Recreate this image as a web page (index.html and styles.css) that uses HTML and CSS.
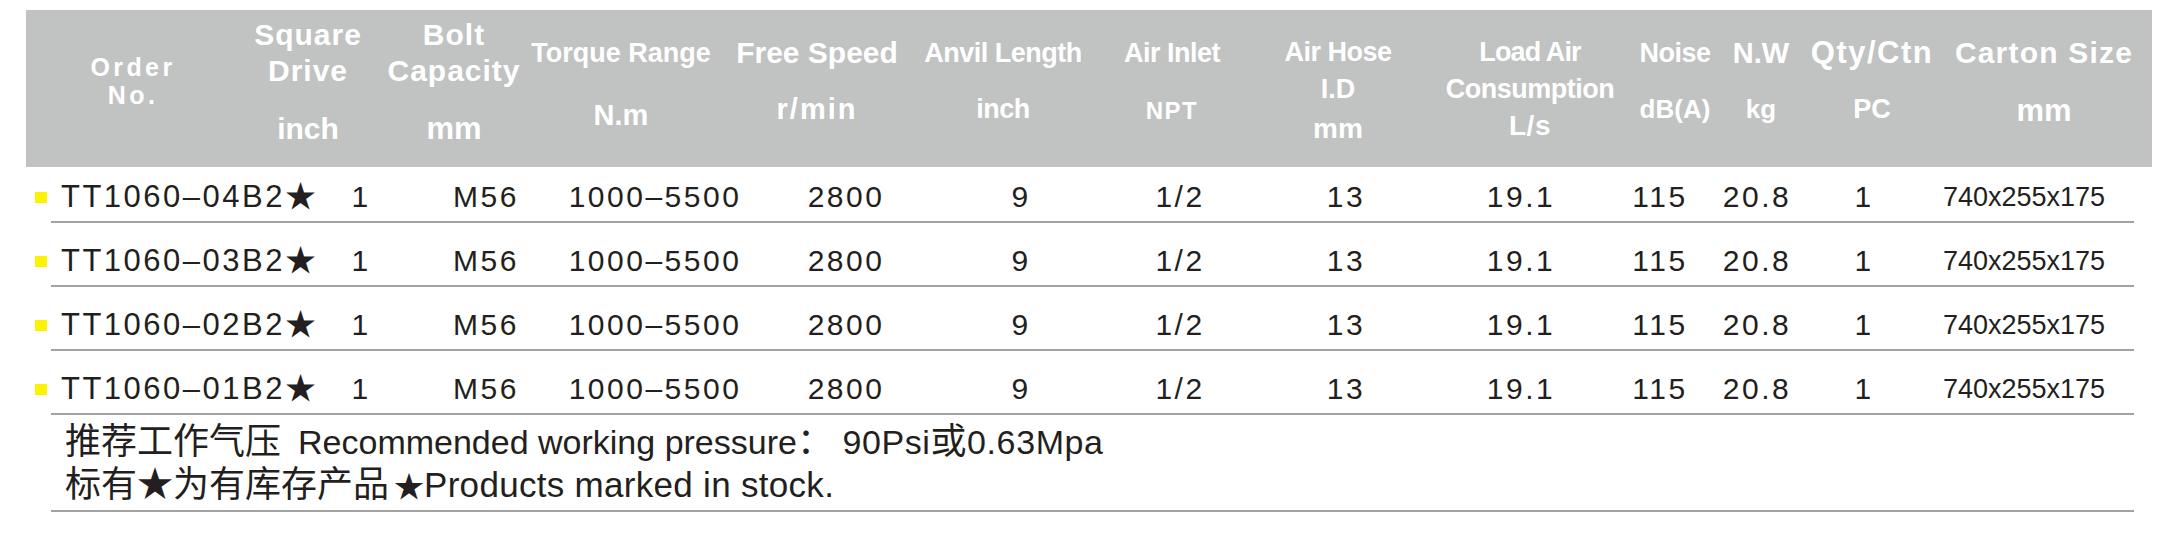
FILE: index.html
```html
<!DOCTYPE html>
<html lang="zh-CN">
<head>
<meta charset="utf-8">
<title>TT1060 Impact Wrench Specifications</title>
<link rel="stylesheet" href="styles.css">
</head>
<body>
<div class="sheet">
  <div class="hdr">
    <div class="hc order"><span class="ord">Order</span><span class="ord">No.</span></div>
    <div class="hc three-a"><div class="t"><span class="f30 ls1">Square</span><span class="f30 ls1">Drive</span></div><span class="u f30">inch</span></div>
    <div class="hc three-a"><div class="t"><span class="f30 ls1">Bolt</span><span class="f30 ls1">Capacity</span></div><span class="u f31">mm</span></div>
    <div class="hc two"><span class="t f27">Torque Range</span><span class="u f29 low">N.m</span></div>
    <div class="hc two"><span class="t f30">Free Speed</span><span class="u f29 ls2 up">r/min</span></div>
    <div class="hc two"><span class="t f27 tight">Anvil Length</span><span class="u f27 tight up">inch</span></div>
    <div class="hc two"><span class="t f27 tight">Air Inlet</span><span class="u npt">NPT</span></div>
    <div class="hc three-b"><div class="t"><span class="f27 tight">Air Hose</span><span class="f27">I.D</span></div><span class="u f28">mm</span></div>
    <div class="hc three-b"><div class="t"><span class="f27 tighter">Load Air</span><span class="f27 tight">Consumption</span></div><span class="u f28 ls05 hi">L/s</span></div>
    <div class="hc two"><span class="t f27 tight">Noise</span><span class="u f26 up">dB(A)</span></div>
    <div class="hc two"><span class="t f29">N.W</span><span class="u f26 up">kg</span></div>
    <div class="hc two"><span class="t f31 ls15">Qty/Ctn</span><span class="u f27 up">PC</span></div>
    <div class="hc two"><span class="t f30 ls12">Carton Size</span><span class="u f31">mm</span></div>
  </div>

  <div class="rows">
    <div class="row first">
      <span class="bullet"></span>
      <div class="cells">
        <div class="c no">TT1060–04B2★</div><div class="c">1</div><div class="c">M56</div><div class="c">1000–5500</div><div class="c">2800</div><div class="c">9</div><div class="c">1/2</div><div class="c">13</div><div class="c">19.1</div><div class="c">115</div><div class="c">20.8</div><div class="c">1</div><div class="c size">740x255x175</div>
      </div>
    </div>
    <div class="row">
      <span class="bullet"></span>
      <div class="cells">
        <div class="c no">TT1060–03B2★</div><div class="c">1</div><div class="c">M56</div><div class="c">1000–5500</div><div class="c">2800</div><div class="c">9</div><div class="c">1/2</div><div class="c">13</div><div class="c">19.1</div><div class="c">115</div><div class="c">20.8</div><div class="c">1</div><div class="c size">740x255x175</div>
      </div>
    </div>
    <div class="row">
      <span class="bullet"></span>
      <div class="cells">
        <div class="c no">TT1060–02B2★</div><div class="c">1</div><div class="c">M56</div><div class="c">1000–5500</div><div class="c">2800</div><div class="c">9</div><div class="c">1/2</div><div class="c">13</div><div class="c">19.1</div><div class="c">115</div><div class="c">20.8</div><div class="c">1</div><div class="c size">740x255x175</div>
      </div>
    </div>
    <div class="row">
      <span class="bullet"></span>
      <div class="cells">
        <div class="c no">TT1060–01B2★</div><div class="c">1</div><div class="c">M56</div><div class="c">1000–5500</div><div class="c">2800</div><div class="c">9</div><div class="c">1/2</div><div class="c">13</div><div class="c">19.1</div><div class="c">115</div><div class="c">20.8</div><div class="c">1</div><div class="c size">740x255x175</div>
      </div>
    </div>
  </div>

  <div class="notes">
    <p><span class="cjk lead">推荐工作气压</span>Recommended working pressure<span class="cjk">：</span> <span class="spaced">90Psi<span class="cjk">或</span>0.63Mpa</span></p>
    <p><span class="cjk">标有★为有库存产品</span><span class="star">★</span><span class="wide">Products marked in stock.</span></p>
  </div>
</div>
</body>
</html>
```

FILE: styles.css
```css
html, body {
  margin: 0;
  padding: 0;
  background: #ffffff;
}

body {
  font-family: "Liberation Sans", "Noto Sans CJK SC", sans-serif;
  color: #231f20;
}

.sheet {
  width: 2175px;
  padding-top: 10px;
}

/* ---------- header band ---------- */
.hdr {
  margin-left: 26px;
  width: 2126px;
  height: 157px;
  box-sizing: border-box;
  padding: 0 8px 0 18px;
  background: #c1c2c2;
  color: #ffffff;
  font-weight: bold;
  display: grid;
  grid-template-columns: 178px 172px 120px 214px 178px 194px 144px 188px 196px 94px 78px 144px 200px;
}

.hc {
  display: flex;
  flex-direction: column;
  align-items: center;
  white-space: nowrap;
  font-size: 28px;
}

.hc span {
  display: block;
  line-height: 28px;
}

.hc .t {
  display: flex;
  flex-direction: column;
  align-items: center;
}

.order { padding-top: 43px; }
.order .ord {
  line-height: 28px;
  font-size: 25px;
  letter-spacing: 3.4px;
}

.two { padding-top: 29px; }
.two .u { margin-top: 30px; }
.two .u.low { margin-top: 34px; }
.two .u.up { margin-top: 28px; }

.three-a { padding-top: 7px; }
.three-a .t span { line-height: 36px; }
.three-a .u { margin-top: 26px; }

.three-b { padding-top: 24px; }
.three-b .t span { line-height: 37px; }
.three-b .u { margin-top: 7px; }
.three-b .u.hi { margin-top: 4px; }

.f26 { font-size: 26px; }
.f27 { font-size: 27px; }
.f28 { font-size: 28px; }
.f29 { font-size: 29px; }
.f30 { font-size: 30px; }
.f31 { font-size: 31px; }

.ls05 { letter-spacing: 0.5px; }
.ls1 { letter-spacing: 1px; }
.ls12 { letter-spacing: 1.2px; }
.ls15 { letter-spacing: 1.5px; }
.ls2 { letter-spacing: 2px; }
.tight { letter-spacing: -0.5px; }
.tighter { letter-spacing: -0.9px; }

.npt {
  font-size: 24px;
  letter-spacing: 1.5px;
}

/* ---------- data rows ---------- */
.rows {
  display: flex;
  flex-direction: column;
}

.row {
  display: flex;
  align-items: flex-end;
  margin-left: 35px;
  width: 2099px;
}

.bullet {
  flex: none;
  width: 12px;
  height: 11px;
  background: #fff200;
  margin: 0 4px 20px 0;
}

.cells {
  flex: 1;
  height: 64px;
  box-sizing: border-box;
  border-bottom: 2px solid #a2a2a2;
  padding-bottom: 9px;
  display: grid;
  grid-template-columns: 269px 82px 168px 170px 212px 138px 180px 152px 198px 80px 114px 100px 1fr;
  align-items: end;
  font-size: 30px;
  line-height: 30px;
  letter-spacing: 2.5px;
  white-space: nowrap;
}

.row.first .cells {
  height: 56px;
}

.c {
  display: flex;
  justify-content: center;
}

.c.no {
  justify-content: flex-start;
  padding-left: 10px;
  font-size: 31px;
}

.c.size {
  font-size: 27px;
  letter-spacing: 0;
}

/* ---------- notes ---------- */
.notes {
  margin-left: 51px;
  width: 2083px;
  box-sizing: border-box;
  padding: 6px 0 4px 14px;
  border-bottom: 2px solid #a2a2a2;
  font-size: 34px;
  line-height: 42px;
}

.notes p {
  margin: 0;
  white-space: nowrap;
}

.cjk {
  font-size: 36px;
}

.cjk.lead {
  margin-right: 17px;
}

.spaced {
  letter-spacing: 0.6px;
}

.star {
  font-family: "Noto Sans CJK SC", sans-serif;
  font-size: 30px;
  margin-left: 5px;
}

.wide {
  font-size: 35px;
  letter-spacing: 0.3px;
}
```
